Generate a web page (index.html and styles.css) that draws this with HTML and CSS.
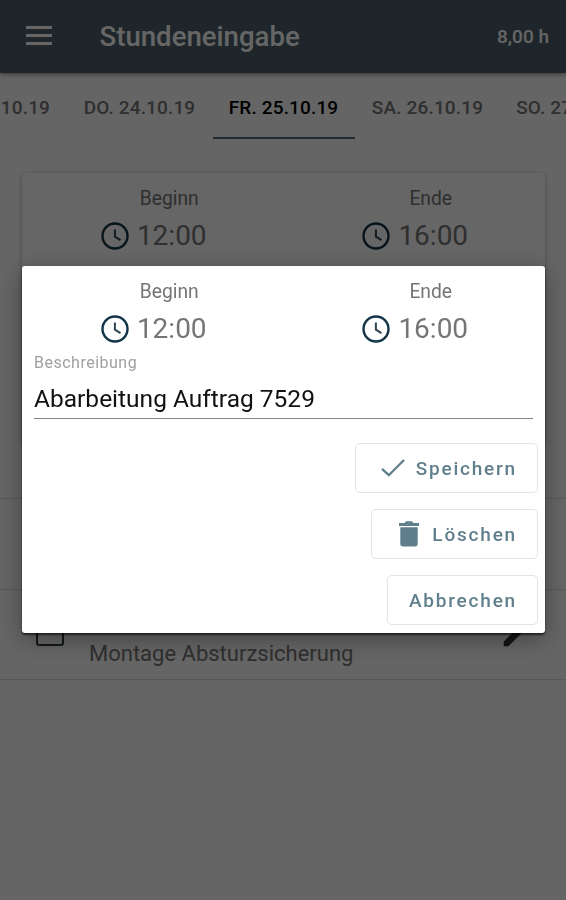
FILE: index.html
```html
<!DOCTYPE html>
<html lang="de">
<head>
  <meta charset="UTF-8" />
  <meta name="viewport" content="width=device-width, initial-scale=1.0"/>
  <title>Stundeneingabe</title>
  <link rel="stylesheet" href="styles.css">
</head>
<body>
  <svg class="sprite" aria-hidden="true">
    <symbol id="clock" viewBox="0 0 28 28">
      <circle cx="14" cy="14" r="12.5" fill="none" stroke="#123448" stroke-width="2.4"/>
      <path d="M13.9 7.5v7.2l5.6 3.4" fill="none" stroke="#2f4450" stroke-width="2"/>
    </symbol>
  </svg>

  <header class="toolbar">
    <svg class="menu" viewBox="0 0 26 19"><path d="M0 1.5h26M0 9.5h26M0 17.5h26" stroke="#fff" stroke-width="2.8"/></svg>
    <h1>Stundeneingabe</h1>
    <span class="total">8,00 h</span>
  </header>

  <nav class="tabs">
    <a class="tab">MI. 23.10.19</a>
    <a class="tab">DO. 24.10.19</a>
    <a class="tab active">FR. 25.10.19</a>
    <a class="tab">SA. 26.10.19</a>
    <a class="tab">SO. 27.10.19</a>
  </nav>

  <main>
    <section class="card">
      <div class="times">
        <div class="time">
          <span class="label">Beginn</span>
          <span class="value"><svg class="clock"><use href="#clock"/></svg>12:00</span>
        </div>
        <div class="time">
          <span class="label">Ende</span>
          <span class="value"><svg class="clock"><use href="#clock"/></svg>16:00</span>
        </div>
      </div>
    </section>

    <ul class="jobs">
      <li class="job"></li>
      <li class="job">
        <span class="checkbox"></span>
        <span class="job-text">Montage Absturzsicherung</span>
        <svg class="pencil" viewBox="0 0 24 24"><path d="M3 17.25V21h3.75L17.81 9.94l-3.75-3.75L3 17.25zM20.71 7.04a1 1 0 0 0 0-1.41l-2.34-2.34a1 1 0 0 0-1.41 0l-1.83 1.83 3.75 3.75 1.83-1.83z" fill="#333"/></svg>
      </li>
    </ul>
  </main>

  <div class="overlay">
    <div class="dialog">
      <div class="times">
        <div class="time">
          <span class="label">Beginn</span>
          <span class="value"><svg class="clock"><use href="#clock"/></svg>12:00</span>
        </div>
        <div class="time">
          <span class="label">Ende</span>
          <span class="value"><svg class="clock"><use href="#clock"/></svg>16:00</span>
        </div>
      </div>

      <div class="field">
        <span class="field-label">Beschreibung</span>
        <span class="field-value">Abarbeitung Auftrag 7529</span>
      </div>

      <div class="actions">
        <button class="btn">
          <svg class="check" viewBox="0 0 24 18"><path d="M1 9.8l6.8 6.4L23 1" fill="none" stroke="#607f8c" stroke-width="2.3"/></svg>
          <span>Speichern</span>
        </button>
        <button class="btn">
          <svg class="trash" viewBox="0 0 20 26"><path d="M0 2h5.5l1.5-1.7h6L14.5 2H20v3H0zM1.3 6.3h17.4v16.5a2.7 2.7 0 0 1-2.7 2.7H4a2.7 2.7 0 0 1-2.7-2.7z" fill="#607f8c"/></svg>
          <span>Löschen</span>
        </button>
        <button class="btn"><span>Abbrechen</span></button>
      </div>
    </div>
  </div>
</body>
</html>
```

FILE: styles.css
```css
* {
  box-sizing: border-box;
}

body {
  margin: 0;
  height: 100vh;
  overflow: hidden;
  background: #fcfcfc;
  font-family: Roboto, sans-serif;
  color: #000;
}

.sprite {
  position: absolute;
  width: 0;
  height: 0;
}

.toolbar {
  display: flex;
  align-items: center;
  height: 73px;
  padding: 0 17px 0 26px;
  background: #4b5f6b;
  color: #fff;
  box-shadow: 0 1px 5px rgba(0,0,0,0.5);
}

.menu {
  width: 26px;
  height: 19px;
  margin-top: -3px;
}

h1 {
  margin: 0 0 0 47.5px;
  font-size: 27.6px;
  font-weight: 500;
}

.total {
  margin-left: auto;
  font-size: 19px;
  font-weight: 500;
}

.tabs {
  display: flex;
  justify-content: center;
  height: 66px;
  padding-left: 3px;
  overflow: hidden;
}

.tab {
  flex: none;
  width: 142px;
  margin-right: 2px;
  line-height: 70px;
  text-align: center;
  font-size: 19px;
  font-weight: 500;
  letter-spacing: 0.15px;
  color: #777;
}

.active {
  color: #000;
  border-bottom: 2px solid #4b6e78;
}

.card {
  height: 270px;
  margin: 34px 21px 0 22px;
  background: #fff;
  border-radius: 4px;
  box-shadow: 0 1px 4px rgba(0,0,0,0.3);
}

.times {
  display: flex;
  padding-top: 12px;
}

.time {
  flex: 1;
  display: flex;
  flex-direction: column;
  align-items: center;
}

.label {
  padding-left: 33px;
  font-size: 19.3px;
  line-height: 28px;
  color: #757575;
}

.value {
  display: flex;
  align-items: center;
  gap: 8px;
  margin-top: 6px;
  padding-left: 2px;
  font-size: 28px;
  line-height: 34px;
  color: #757575;
}

.clock {
  width: 28px;
  height: 28px;
}

.jobs {
  margin: 55px 0 0;
  padding: 0;
  list-style: none;
}

.job {
  display: flex;
  align-items: flex-end;
  height: 90.5px;
  border-top: 1px solid #ddd;
  padding: 0 36px 12px 36px;
}

.job:last-child {
  height: 91px;
  border-bottom: 1px solid #ddd;
}

.checkbox {
  width: 28px;
  height: 28px;
  margin-bottom: 21px;
  border: 2px solid #2c3a42;
  border-radius: 3px;
}

.job-text {
  margin-left: 25px;
  font-size: 22px;
  line-height: 26px;
  color: #757575;
}

.pencil {
  width: 30px;
  height: 30px;
  margin: 0 0 17px auto;
}

.overlay {
  position: fixed;
  inset: 0;
  display: flex;
  align-items: center;
  justify-content: center;
  padding: 0 21px 1px 22px;
  background: rgba(0,0,0,0.6);
}

.dialog {
  width: 100%;
  height: 367px;
  background: #fff;
  border-radius: 3px;
  box-shadow: 0 2px 2px rgba(0,0,0,0.6), 0 6px 24px rgba(0,0,0,0.35);
}

.field {
  display: flex;
  flex-direction: column;
  margin: 6px 12px 0;
  border-bottom: 1px solid #858585;
}

.field-label {
  font-size: 16px;
  line-height: 21px;
  letter-spacing: 0.5px;
  color: #a0a0a0;
}

.field-value {
  padding: 10px 0 3px;
  font-size: 24.5px;
  line-height: 32px;
  color: #111;
}

.actions {
  display: flex;
  flex-direction: column;
  align-items: flex-end;
  gap: 16px;
  padding: 24px 7px 0 0;
}

.btn {
  display: flex;
  align-items: center;
  height: 50px;
  padding: 0 20px 0 21px;
  background: #fff;
  border: 1.5px solid #e4e4e4;
  border-radius: 5px;
  font-family: inherit;
  font-size: 19px;
  font-weight: 500;
  letter-spacing: 1.8px;
  color: #607f8c;
}

.check {
  width: 24px;
  height: 18px;
  margin: 0 11px 0 4px;
}

.trash {
  width: 20px;
  height: 26px;
  margin: 0 13px 0 6px;
}
```
